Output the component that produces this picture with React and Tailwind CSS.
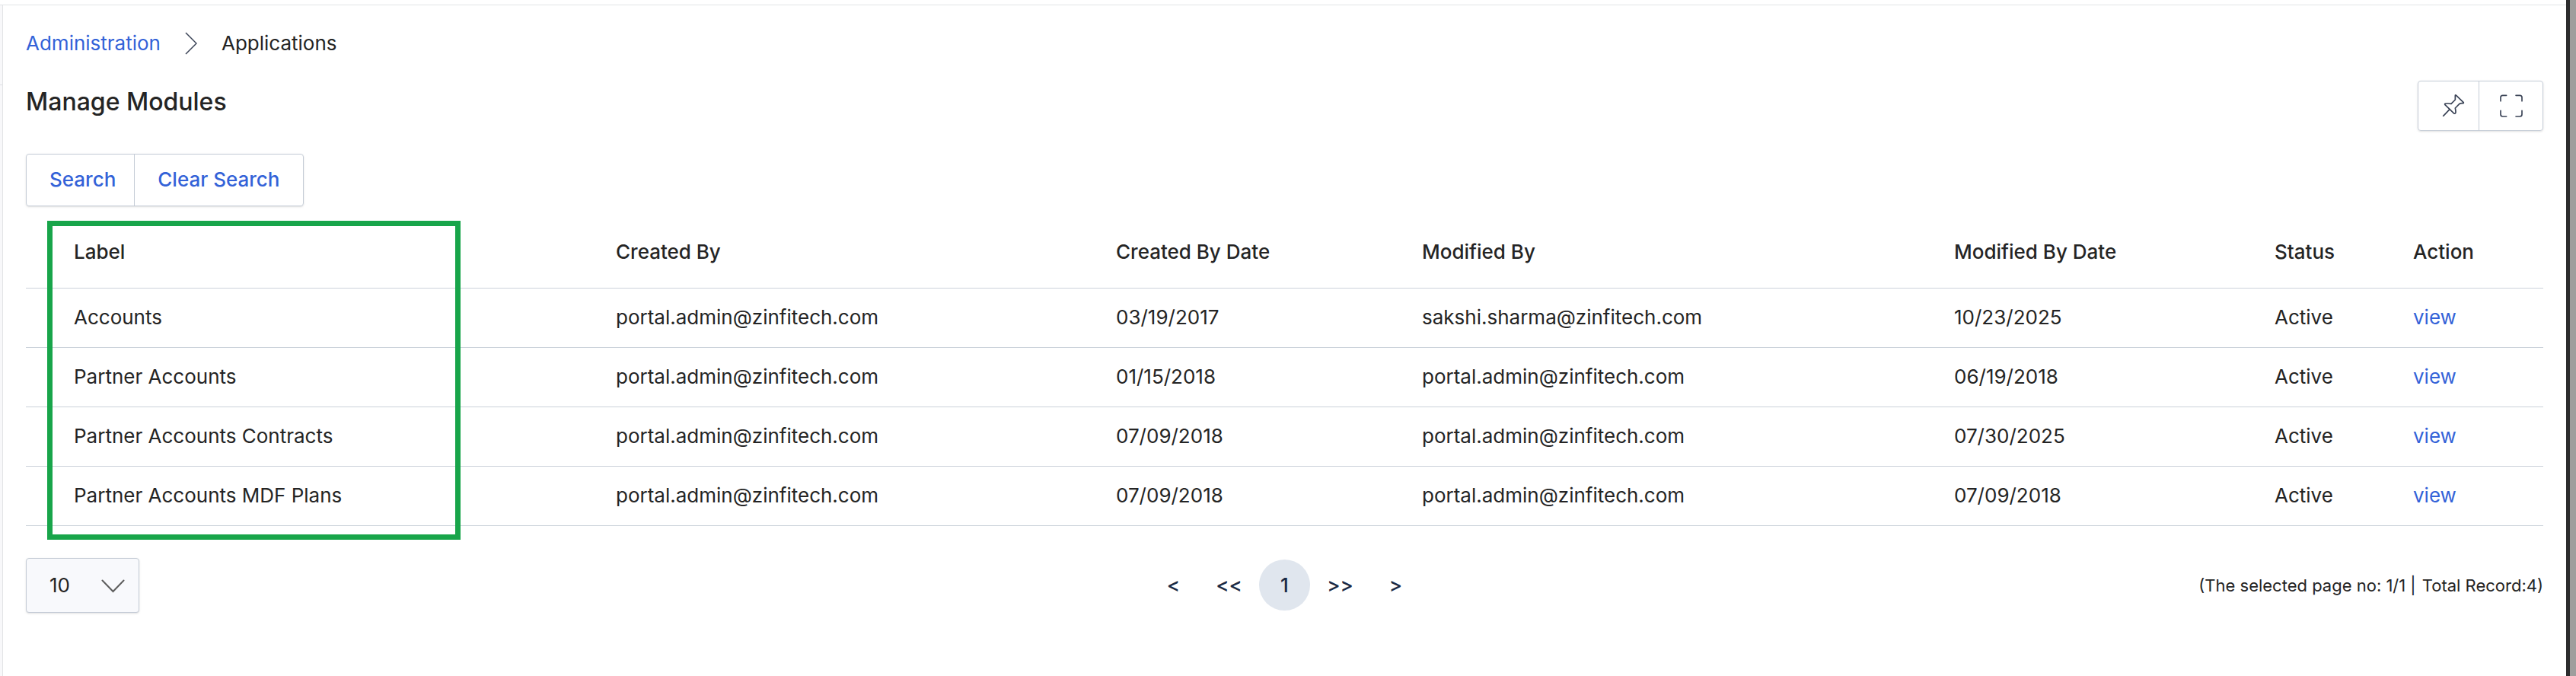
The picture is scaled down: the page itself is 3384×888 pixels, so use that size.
const COLUMNS = [
  { key: 'label', title: 'Label', width: 'w-[712px]' },
  { key: 'createdBy', title: 'Created By', width: 'w-[657px]' },
  { key: 'createdDate', title: 'Created By Date', width: 'w-[402px]' },
  { key: 'modifiedBy', title: 'Modified By', width: 'w-[699px]' },
  { key: 'modifiedDate', title: 'Modified By Date', width: 'w-[421px]' },
  { key: 'status', title: 'Status', width: 'w-[182px]' },
  { key: 'action', title: 'Action', width: 'w-[234px]' },
]

const PORTAL_ADMIN = 'portal.admin@zinfitech.com'

const MODULES = [
  {
    label: 'Accounts',
    createdBy: PORTAL_ADMIN,
    createdDate: '03/19/2017',
    modifiedBy: 'sakshi.sharma@zinfitech.com',
    modifiedDate: '10/23/2025',
    status: 'Active',
  },
  {
    label: 'Partner Accounts',
    createdBy: PORTAL_ADMIN,
    createdDate: '01/15/2018',
    modifiedBy: PORTAL_ADMIN,
    modifiedDate: '06/19/2018',
    status: 'Active',
  },
  {
    label: 'Partner Accounts Contracts',
    createdBy: PORTAL_ADMIN,
    createdDate: '07/09/2018',
    modifiedBy: PORTAL_ADMIN,
    modifiedDate: '07/30/2025',
    status: 'Active',
  },
  {
    label: 'Partner Accounts MDF Plans',
    createdBy: PORTAL_ADMIN,
    createdDate: '07/09/2018',
    modifiedBy: PORTAL_ADMIN,
    modifiedDate: '07/09/2018',
    status: 'Active',
  },
]

function PinIcon() {
  return (
    <svg className="w-[30px] h-[30px]" viewBox="0 0 90 90" fill="none" stroke="currentColor" strokeWidth={5} strokeLinecap="round" strokeLinejoin="round">
      <path d="M52 8Q52 3 56 7L84 34Q87 38 82 38Q72 37 68 41L52 57Q54 66 54 73Q53 81 46 77L12 44Q9 40 13 39Q24 37 36 40L52 24Z" />
      <path d="M30 62L5 88" />
    </svg>
  )
}

function FullscreenIcon() {
  return (
    <svg className="w-[30px] h-[30px]" viewBox="0 0 90 90" fill="none" stroke="currentColor" strokeWidth={5} strokeLinecap="round">
      <path d="M3 26V12Q3 4 11 4H26M63 4H79Q87 4 87 12V26M87 64V79Q87 87 79 87H63M26 87H11Q3 87 3 79V64" />
    </svg>
  )
}

function Breadcrumb() {
  return (
    <nav aria-label="Breadcrumb" className="flex items-center h-10">
      <a href="#administration" className="text-[#3362d8]">Administration</a>
      <svg className="w-4 h-[30px] mx-8 text-[#3a4356]" viewBox="0 0 16 30" fill="none" stroke="currentColor" strokeWidth={1.5}>
        <path d="M1 1L15 15L1 29" />
      </svg>
      <span>Applications</span>
    </nav>
  )
}

function ModulesTable() {
  return (
    <div className="relative mt-3.5">
      <table className="w-full table-fixed text-left border-collapse">
        <thead>
          <tr className="h-[93px] border-b border-[#cbd2da]">
            {COLUMNS.map((col) => (
              <th key={col.key} scope="col" className={`${col.width} pl-[63px] font-medium`}>
                {col.title}
              </th>
            ))}
          </tr>
        </thead>
        <tbody>
          {MODULES.map((row) => (
            <tr key={row.label} className="h-[78px] border-b border-[#cbd2da]">
              {COLUMNS.map((col) => (
                <td key={col.key} className="pl-[63px]">
                  {col.key === 'action' ? (
                    <a href="#view" className="text-[#3362d8]">view</a>
                  ) : (
                    row[col.key]
                  )}
                </td>
              ))}
            </tr>
          ))}
        </tbody>
      </table>

      {/* Highlight around the label column */}
      <div className="absolute left-7 top-[5px] -bottom-[18px] w-[543px] border-7 border-[#18a54a] pointer-events-none"></div>
    </div>
  )
}

function Pager() {
  return (
    <nav aria-label="Pagination" className="flex items-center gap-1.5 font-medium text-[#1b2a44]">
      {['<', '<<', '1', '>>', '>'].map((item) => (
        <button
          key={item}
          type="button"
          className={item === '1' ? 'w-[67px] h-[67px] rounded-full bg-[#e0e6ee]' : 'w-[67px] h-[67px] rounded-full'}
        >
          {item}
        </button>
      ))}
    </nav>
  )
}

export default function App() {
  return (
    <div className="min-h-screen flex flex-col bg-white font-['Inter',sans-serif] text-[26px] leading-10 text-[#242424]">
      <div className="flex-1 flex">
        {/* Sidebar edge */}
        <div className="w-[3px] mt-1.5 bg-[#f8f8fa] border-t border-[#e2e4e6]">
          <div className="h-[105px] border-b border-[#dddfe3]"></div>
        </div>

        <main className="flex-1 mt-1.5 border-t border-l border-[#e2e4e6] pl-[30px] pr-[30px] pt-[30px]">
          <Breadcrumb />

          <div className="flex items-start justify-between mt-[29px]">
            <h1 className="text-[32px] leading-14 font-medium">Manage Modules</h1>
            <div className="flex rounded border border-[#c5ccd6] shadow-sm text-[#3a4356]">
              <button type="button" aria-label="Pin" className="w-20 h-16 pl-3 pb-0.5 flex items-center justify-center border-r border-[#c5ccd6]">
                <PinIcon />
              </button>
              <button type="button" aria-label="Full screen" className="w-[83px] h-16 flex items-center justify-center">
                <FullscreenIcon />
              </button>
            </div>
          </div>

          <div className="mt-[30px] inline-flex rounded border border-[#c5ccd6] shadow-sm font-medium text-[#3362d8]">
            <button type="button" className="h-[67px] pl-[30px] pr-6 pb-0.5 border-r border-[#c5ccd6]">Search</button>
            <button type="button" className="h-[67px] px-[30px] pb-0.5">Clear Search</button>
          </div>

          <ModulesTable />

          <div className="grid grid-cols-[1fr_auto_1fr] items-center mt-[42px]">
            <div className="relative w-[149px]">
              <select
                aria-label="Records per page"
                defaultValue="10"
                className="w-full h-[72px] pl-[30px] appearance-none rounded border border-[#c5ccd6] bg-[#f8f9fc] shadow-sm"
              >
                <option>10</option>
                <option>25</option>
                <option>50</option>
              </select>
              <svg className="absolute right-[19px] top-7 w-[31px] h-[18px] text-[#5c5c5c] pointer-events-none" viewBox="0 0 31 18" fill="none" stroke="currentColor" strokeWidth={2} strokeLinecap="round">
                <path d="M1.5 1.5L15.5 16L29.5 1.5" />
              </svg>
            </div>
            <Pager />
            <p className="text-right text-[22px]">
              (The selected page no: 1/1<span className="ml-1.5 mr-0.5">|</span> Total Record:4)
            </p>
          </div>
        </main>

        {/* Window edge */}
        <div className="w-[5px] bg-[#2c2c2d]"></div>
        <div className="w-2 bg-[#9f9e9d]"></div>
      </div>
    </div>
  )
}
